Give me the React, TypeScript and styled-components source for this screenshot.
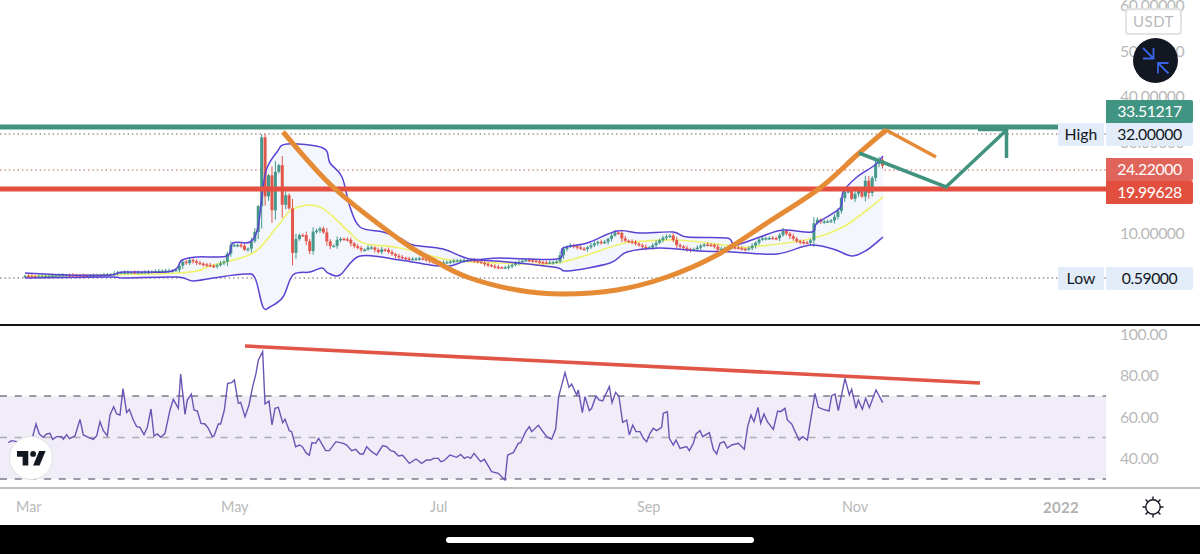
import React from "react";
import styled, { createGlobalStyle } from "styled-components";

const GlobalStyle = createGlobalStyle`
  html, body {
    margin: 0;
    background: #000;
    overflow: hidden;
    font-family: "Lato", "Open Sans", sans-serif;
  }
`;

type Pt = [number, number];

// all in page pixels, read off the chart
const UPPER_BAND: Pt[] = [[25,273],[67,275],[110,275],[123,272],[167,272],[177,268],[182,260],[197,257],[227,256],[233,243],[250,242],[258,227],[263,187],[267,168],[277,152],[287,144],[323,148],[330,163],[342,177],[350,207],[360,227],[383,232],[400,238],[413,245],[443,249],[470,259],[500,258],[557,259],[563,248],[587,243],[617,231],[640,233],[673,232],[687,237],[727,238],[735,245],[760,237],[783,230],[812,232],[817,223],[840,208],[843,192],[857,177],[875,165],[883,156]];
const LOWER_BAND: Pt[] = [[25,278],[110,277],[123,278],[177,277],[193,281],[213,278],[245,274],[255,278],[263,307],[270,307],[283,297],[293,275],[310,272],[322,268],[328,273],[340,275],[360,256],[400,260],[430,265],[450,266],[477,260],[553,267],[567,271],[610,263],[627,252],[660,248],[700,251],[733,252],[777,254],[810,245],[833,249],[852,256],[867,250],[883,237]];
const BASIS: Pt[] = [[25,276],[177,273],[213,265],[253,253],[277,227],[293,209],[320,207],[347,230],[363,243],[400,248],[450,260],[500,263],[557,263],[617,245],[633,242],[677,240],[733,246],[750,247],[810,239],[843,227],[867,210],[883,197]];
const PRICE_KEYS: Pt[] = [[25,276],[110,275],[118,273],[130,272],[170,271],[177,270],[182,260],[185,263],[190,258],[197,262],[210,267],[215,268],[225,262],[230,245],[240,243],[246,250],[250,245],[254.8,232],[258.2,207],[261.6,136],[265,197],[268.5,175],[271.9,211],[275.3,172],[278.8,165],[282.2,205],[285.6,195],[289,207],[292.5,253],[297,235],[302,233],[307,243],[310,253],[313,233],[318,232],[322,228],[325,240],[332,248],[335,243],[338,237],[347,238],[353,245],[363,252],[370,248],[378,253],[383,248],[397,255],[410,260],[420,260],[433,262],[453,260],[473,262],[507,267],[527,261],[557,261],[563,250],[570,247],[583,250],[597,240],[603,242],[617,232],[623,242],[633,243],[647,247],[663,238],[670,237],[677,247],[690,250],[703,243],[713,245],[717,251],[733,248],[747,248],[760,238],[777,240],[783,232],[797,240],[810,242],[815,218],[820,223],[830,223],[837,215],[842,195],[847,187],[852,198],[858,187],[861,200],[866,178],[869,195],[872,180],[877,160],[880,162],[884,170]];
const ORANGE: Pt[] = [[283,132],[333,187],[400,240],[433,260],[467,277],[517,290],[563,294],[617,290],[667,277],[717,255],[767,223],[820,188],[857,155],[886,130]];

// rsi values taken from the 3x crops, [x, y] relative to the pane top after scaling
const RSI_RAW: Pt[] = [[25,338],[35,332],[50,335],[60,345],[85,340],[98,320],[108,282],[118,312],[130,322],[140,312],[150,310],[158,328],[170,320],[185,320],[190,328],[200,314],[208,326],[225,318],[240,268],[250,315],[265,322],[280,328],[290,318],[300,275],[310,302],[322,317],[330,255],[341,230],[350,252],[360,255],[369,176],[380,248],[388,238],[400,270],[410,290],[420,292],[432,314],[442,292],[453,237],[462,318],[472,312],[482,322],[495,310],[510,240],[520,208],[535,235],[542,132],[555,253],[562,210],[574,192],[582,240],[592,243],[603,280],[615,282],[625,295],[637,320],[642,318],[655,282],[662,282],[673,240],[683,160],[695,158],[703,150],[715,220],[722,217],[735,260],[747,225],[758,170],[768,130],[775,90],[788,65],[795,222],[807,213],[816,285],[825,235],[835,232],[848,278],[855,268],[868,302],[875,305],[887,350],[898,345],[907,350],[918,368],[928,376],[936,338],[947,340],[956,325],[977,362],[988,362],[1008,335],[1030,340],[1040,345],[1055,362],[1067,358],[1080,372],[1090,372],[1100,350],[1115,365],[1130,375],[1148,347],[1160,350],[1172,362],[1183,365],[1195,378],[1208,376],[1228,400],[1248,387],[1265,400],[1280,390],[1292,390],[1300,385],[1315,385],[1322,395],[1332,392],[1350,375],[1370,382],[1382,373],[1393,385],[1403,380],[1412,385],[1422,370],[1442,395],[1453,388],[1475,425],[1495,430],[1515,450],[1523,375],[1540,368],[1555,340],[1562,338],[1577,305],[1588,290],[1595,305],[1615,286],[1640,320],[1655,328],[1667,297],[1676,200],[1695,128],[1707,172],[1715,162],[1730,195],[1735,180],[1747,248],[1755,200],[1768,242],[1775,235],[1788,198],[1797,210],[1808,213],[1828,170],[1836,218],[1847,187],[1857,200],[1868,277],[1880,270],[1888,315],[1898,285],[1908,305],[1920,305],[1930,325],[1940,335],[1950,310],[1960,295],[1970,302],[1985,292],[1990,250],[2002,245],[2008,325],[2020,345],[2028,330],[2040,355],[2060,350],[2068,362],[2080,340],[2088,312],[2100,302],[2108,320],[2128,308],[2140,358],[2150,372],[2160,340],[2172,335],[2182,354],[2195,345],[2215,340],[2233,358],[2243,290],[2253,255],[2262,275],[2274,232],[2282,280],[2292,252],[2302,275],[2320,298],[2333,243],[2342,245],[2355,235],[2362,270],[2375,282],[2397,330],[2408,320],[2422,330],[2445,190],[2455,232],[2470,238],[2487,243],[2495,197],[2505,192],[2515,242],[2535,145],[2548,195],[2555,178],[2568,235],[2575,210],[2587,238],[2597,205],[2608,233],[2628,180],[2648,218]];

const toPoints = (pts: Pt[]) => pts.map(([x, y]) => `${x},${y}`).join(" ");

// catmull-rom through the read-off points so the curves don't look like polygons
const smoothPath = (pts: Pt[]) => {
  let d = `M${pts[0][0]} ${pts[0][1]}`;
  for (let i = 0; i < pts.length - 1; i++) {
    const p0 = pts[Math.max(0, i - 1)];
    const p1 = pts[i];
    const p2 = pts[i + 1];
    const p3 = pts[Math.min(pts.length - 1, i + 2)];
    const c1x = p1[0] + (p2[0] - p0[0]) / 6;
    const c1y = p1[1] + (p2[1] - p0[1]) / 6;
    const c2x = p2[0] - (p3[0] - p1[0]) / 6;
    const c2y = p2[1] - (p3[1] - p1[1]) / 6;
    d += `C${c1x.toFixed(1)} ${c1y.toFixed(1)} ${c2x.toFixed(1)} ${c2y.toFixed(1)} ${p2[0]} ${p2[1]}`;
  }
  return d;
};

const priceAt = (x: number) => {
  for (let i = 1; i < PRICE_KEYS.length; i++) {
    const [x0, y0] = PRICE_KEYS[i - 1];
    const [x1, y1] = PRICE_KEYS[i];
    if (x <= x1) return y0 + ((y1 - y0) * (x - x0)) / (x1 - x0);
  }
  return PRICE_KEYS[PRICE_KEYS.length - 1][1];
};

const buildCandles = () => {
  const out: { x: number; open: number; close: number; high: number; low: number }[] = [];
  let prev = 276;
  for (let i = 0; i * 3.43 + 25 <= 884; i++) {
    const x = i * 3.43 + 25;
    const amp = x < 175 ? 0.5 : 1.6;
    const jitter = Math.sin(i * 12.9898) * amp;
    const close = priceAt(x) + (x > 250 && x < 296 ? 0 : jitter);
    const move = Math.abs(close - prev);
    const high = Math.max(134, Math.min(prev, close) - 1 - Math.abs(Math.sin(i * 7.3)) * (1 + move * 0.25));
    const low = Math.max(prev, close) + 1 + Math.abs(Math.cos(i * 4.1)) * (1 + move * 0.3);
    out.push({ x, open: prev, close, high, low });
    prev = close;
  }
  return out;
};

const CANDLES = buildCandles();

const PRICE_TICKS = ["60.00000", "50.00000", "40.00000", "30.00000", "20.00000", "10.00000"];
const RSI_TICKS = ["100.00", "80.00", "60.00", "40.00"];
const MONTHS = ["Mar", "May", "Jul", "Sep", "Nov"];

const PRICE_TAGS = [
  { top: 100, value: "33.51217", bg: "#3f9482", fg: "#fff" },
  { top: 123, value: "32.00000", bg: "#e3ecf9", fg: "#131722", name: "High" },
  { top: 158, value: "24.22000", bg: "#e0645a", fg: "#fff" },
  { top: 181, value: "19.99628", bg: "#e34f3f", fg: "#fff" },
  { top: 267, value: "0.59000", bg: "#e3ecf9", fg: "#131722", name: "Low" },
];

const Page = styled.div`
  width: 1200px;
  height: 554px;
  display: flex;
  flex-direction: column;
  background: #fff;
`;

const MainPane = styled.section`
  position: relative;
  display: flex;
  height: 324px;
  border-bottom: 2px solid #131313;
`;

const RsiPane = styled.section`
  display: flex;
  height: 161px;
  border-bottom: 2px solid #bdbdbd;
`;

const Plot = styled.div`
  width: 1106px;
  flex: none;
  line-height: 0;

  svg {
    display: block;
  }
`;

const PriceScale = styled.div`
  position: relative;
  flex: 1;
  padding-left: 14px;
`;

const ClippedScale = styled(PriceScale)`
  overflow: hidden;
`;

const TickList = styled.div<{ $offset: number; $gap: number }>`
  display: flex;
  flex-direction: column;
  gap: ${(p) => p.$gap}px;
  margin-top: ${(p) => p.$offset}px;
  font-size: 15.8px;
  letter-spacing: -0.45px;
  color: #b9b9b9;
  line-height: 18px;
`;

const TagRow = styled.div<{ $top: number }>`
  position: absolute;
  top: ${(p) => p.$top}px;
  right: 7px;
  display: flex;
  gap: 2px;
`;

const ValueTag = styled.div<{ $bg: string; $fg: string }>`
  width: 87px;
  height: 22.5px;
  border-radius: 0 2px 2px 0;
  background: ${(p) => p.$bg};
  color: ${(p) => p.$fg};
  font-size: 15.8px;
  letter-spacing: -0.45px;
  line-height: 22px;
  text-align: center;
`;

const NameTag = styled.div`
  width: 46px;
  height: 22.5px;
  background: #e3ecf9;
  color: #131722;
  font-size: 15.8px;
  line-height: 22px;
  text-align: center;
`;

const UnitBadge = styled.div`
  position: absolute;
  top: 8px;
  left: 19px;
  width: 53px;
  height: 23px;
  border: 2px solid #e2e2e2;
  border-radius: 4px;
  background: rgba(255, 255, 255, 0.8);
  color: #b9b9b9;
  font-size: 15px;
  letter-spacing: 0.5px;
  line-height: 23px;
  text-align: center;
`;

const CollapseButton = styled.div`
  position: absolute;
  top: 38px;
  left: 27px;
  width: 45px;
  height: 45px;
  border-radius: 50%;
  background: #131722;
  display: flex;
  align-items: center;
  justify-content: center;
`;

const LogoBadge = styled.div`
  position: absolute;
  left: 9px;
  top: 110px;
  width: 42px;
  height: 42px;
  border: 1.5px solid #e3e3e3;
  border-radius: 50%;
  background: #fff;
  display: flex;
  align-items: center;
  justify-content: center;
`;

const RsiPlot = styled(Plot)`
  position: relative;
`;

const TimeScale = styled.div`
  display: flex;
  height: 36px;
  align-items: center;
  background: #fff;
`;

const TimeLabels = styled.div`
  width: 1106px;
  box-sizing: border-box;
  padding-left: 16px;
  display: grid;
  grid-template-columns: 205px 209px 207px 205px 201px 1fr;
  font-size: 14.4px;
  color: #b9b9b9;
`;

const YearLabel = styled.span`
  font-weight: 700;
  font-size: 15px;
  letter-spacing: 0.3px;
  color: #b2b2b2;
`;

const ThemeSlot = styled.div`
  flex: 1;
  display: flex;
  justify-content: center;
  line-height: 0;
`;

const HomeBar = styled.div`
  flex: 1;
  background: #000;
  display: flex;
  align-items: center;
  justify-content: center;
`;

const HomeIndicator = styled.div`
  width: 308px;
  height: 6px;
  border-radius: 3px;
  background: #fff;
`;

const CandleChart = () => (
  <g>
    {CANDLES.map((c, i) => {
      const color = c.close > c.open ? "#e2574c" : "#45988a";
      const top = Math.min(c.open, c.close);
      return (
        <g key={i} fill={color}>
          <rect x={c.x - 0.5} y={c.high} width={1} height={c.low - c.high} />
          <rect x={c.x - 1.5} y={top} width={3} height={Math.max(1.4, Math.abs(c.close - c.open))} />
        </g>
      );
    })}
  </g>
);

const CollapseIcon = () => (
  <svg width="30" height="30" viewBox="-15 -15 30 30" fill="none" stroke="#3b63e6" strokeWidth="1.8">
    <path d="M-13-13-2.5-2.5M-13-2.5H-2.5V-13" />
    <path d="M12.5 12.5 2 2M12.5 2H2V12.5" />
  </svg>
);

const TvLogo = () => (
  <svg width="29" height="15" viewBox="0 0 36 18.5" fill="#131722">
    <path d="M14 18H7V7H0V0h14v18zM28 18h-8l7.5-18h8L28 18z" />
    <circle cx="20" cy="3.6" r="3.6" />
  </svg>
);

const SunIcon = () => (
  <svg width="22" height="22" viewBox="-11 -11 22 22" fill="none" stroke="#131722" strokeWidth="1.4">
    <circle r="7.2" />
    <path d="M0-10.5v3.3M0 10.5V7.2M-10.5 0h3.3M10.5 0H7.2M-7.4-7.4l2.3 2.3M7.4 7.4 5.1 5.1M7.4-7.4 5.1-5.1M-7.4 7.4l2.3-2.3" />
  </svg>
);

export default function App() {
  const bandFill = [...UPPER_BAND, ...[...LOWER_BAND].reverse()];
  return (
    <Page>
      <GlobalStyle />
      <MainPane>
        <Plot>
          <svg width="1106" height="324" viewBox="0 0 1106 324" fill="none">
            <g strokeWidth="1.3" strokeDasharray="1.4 3">
              <line x1="0" y1="134" x2="1106" y2="134" stroke="#a58f8f" />
              <line x1="0" y1="170" x2="1106" y2="170" stroke="#d98d85" />
              <line x1="0" y1="278" x2="1106" y2="278" stroke="#8f8f8f" />
            </g>
            <polygon points={toPoints(bandFill)} fill="#f3f6fc" />
            <path d={smoothPath(BASIS)} stroke="#eef26f" strokeWidth="1.7" />
            <CandleChart />
            <path d={smoothPath(UPPER_BAND)} stroke="#5b42d4" strokeWidth="1.5" />
            <path d={smoothPath(LOWER_BAND)} stroke="#5b42d4" strokeWidth="1.5" />
            <rect x="0" y="124.5" width="1060" height="5" fill="#41937f" />
            <rect x="0" y="186.5" width="1106" height="5" fill="#e54f40" />
            <path d={smoothPath(ORANGE)} stroke="#e58a35" strokeWidth="5" />
            <polyline points="886,130 936,157" stroke="#e58a35" strokeWidth="3.5" />
            <polyline points="859,153 946,187 1006.5,130" stroke="#41937f" strokeWidth="3.5" />
            <path d="M978 129.5H1006.5V158" stroke="#41937f" strokeWidth="3.5" />
          </svg>
        </Plot>
        <ClippedScale>
          <TickList $offset={-4} $gap={27.6}>
            {PRICE_TICKS.map((t) => (
              <span key={t}>{t}</span>
            ))}
          </TickList>
          <UnitBadge>USDT</UnitBadge>
          <CollapseButton>
            <CollapseIcon />
          </CollapseButton>
        </ClippedScale>
        {PRICE_TAGS.map((t) => (
          <TagRow key={t.value} $top={t.top}>
            {t.name && <NameTag>{t.name}</NameTag>}
            <ValueTag $bg={t.bg} $fg={t.fg}>
              {t.value}
            </ValueTag>
          </TagRow>
        ))}
      </MainPane>
      <RsiPane>
        <RsiPlot>
          <svg width="1106" height="161" viewBox="0 0 1106 161" fill="none">
            <rect x="0" y="70" width="1106" height="83" fill="#f0edf8" />
            <g strokeWidth="1.3" strokeDasharray="7 7.7">
              <line x1="0" y1="70" x2="1106" y2="70" stroke="#7d7b86" />
              <line x1="0" y1="111.5" x2="1106" y2="111.5" stroke="#adabb3" />
              <line x1="0" y1="153" x2="1106" y2="153" stroke="#7d7b86" />
            </g>
            <polyline
              points={RSI_RAW.map(([x, y]) => `${x / 3},${4 + y / 3}`).join(" ")}
              stroke="#6a55b5"
              strokeWidth="1.4"
            />
            <line x1="245" y1="20" x2="980" y2="57" stroke="#e05545" strokeWidth="3.6" />
          </svg>
          <LogoBadge>
            <TvLogo />
          </LogoBadge>
        </RsiPlot>
        <PriceScale>
          <TickList $offset={-1} $gap={23.4}>
            {RSI_TICKS.map((t) => (
              <span key={t}>{t}</span>
            ))}
          </TickList>
        </PriceScale>
      </RsiPane>
      <TimeScale>
        <TimeLabels>
          {MONTHS.map((m) => (
            <span key={m}>{m}</span>
          ))}
          <YearLabel>2022</YearLabel>
        </TimeLabels>
        <ThemeSlot>
          <SunIcon />
        </ThemeSlot>
      </TimeScale>
      <HomeBar>
        <HomeIndicator />
      </HomeBar>
    </Page>
  );
}
